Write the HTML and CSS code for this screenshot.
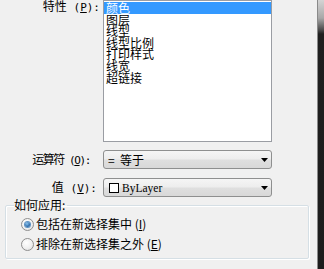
FILE: index.html
```html
<!DOCTYPE html>
<html>
<head>
<meta charset="utf-8">
<link rel="stylesheet" href="styles.css">
</head>
<body>
<div class="main">
  <div class="row row-list">
    <div class="lbl lbl-prop">特性<span class="key"> (<u>P</u>):</span></div>
    <div class="listbox">
      <div class="item sel">颜色</div>
      <div class="item">图层</div>
      <div class="item">线型</div>
      <div class="item">线型比例</div>
      <div class="item">打印样式</div>
      <div class="item">线宽</div>
      <div class="item">超链接</div>
    </div>
  </div>
  <div class="row row-combo first">
    <div class="lbl lbl-op"><span class="narrow">运算符</span><span class="key narrow-key"> (<u>O</u>):</span></div>
    <div class="combo">
      <div class="combo-text">=  等于</div>
      <svg class="arrow" width="7" height="4" viewBox="0 0 7 4"><polygon points="0,0 7,0 3.5,4" fill="#000"/></svg>
    </div>
  </div>
  <div class="row row-combo second">
    <div class="lbl lbl-val">值<span class="key"> (<u>V</u>):</span></div>
    <div class="combo">
      <div class="combo-text"><span class="swatch"></span><span class="bylayer">ByLayer</span></div>
      <svg class="arrow" width="7" height="4" viewBox="0 0 7 4"><polygon points="0,0 7,0 3.5,4" fill="#000"/></svg>
    </div>
  </div>
  <fieldset class="group">
    <legend>如何应用:</legend>
    <div class="radio-row">
      <span class="radio on"><span class="dot"></span></span>
      <span class="radio-text">包括在新选择集中 (<u>I</u>)</span>
    </div>
    <div class="radio-row">
      <span class="radio"></span>
      <span class="radio-text">排除在新选择集之外 (<u>E</u>)</span>
    </div>
  </fieldset>
</div>
<div class="edge"></div>
</body>
</html>
```
FILE: styles.css
```css
html, body {
  margin: 0;
  padding: 0;
}
body {
  width: 324px;
  height: 269px;
  overflow: hidden;
  background: #f0f0f0;
  font-family: "Noto Sans CJK SC", "Noto Sans", sans-serif;
  font-size: 12px;
  color: #000;
  display: flex;
}
.main {
  width: 317px;
  display: flex;
  flex-direction: column;
}
.row {
  display: flex;
}
.row-list {
  align-items: flex-start;
  height: 142px;
}
.lbl {
  width: 103px;
  box-sizing: border-box;
  text-align: right;
  line-height: 12px;
  white-space: nowrap;
}
.key {
  font-family: "DejaVu Sans Mono", monospace;
  font-size: 11px;
  white-space: pre;
}
.narrow {
  letter-spacing: -1.5px;
}
.narrow-key {
  letter-spacing: -1.4px;
}
.lbl-prop {
  padding-right: 3px;
  padding-top: 0;
}
.lbl-op {
  padding-right: 13px;
}
.lbl-val {
  padding-right: 6px;
}
.listbox {
  width: 169px;
  height: 142px;
  box-sizing: border-box;
  border: 1px solid #9a9da3;
  background: #fff;
  padding-top: 1px;
}
.item {
  height: 11.6px;
  line-height: 11.6px;
  padding-left: 2px;
  white-space: nowrap;
}
.item.sel {
  background: #3399ff;
  color: #fff;
}
.row-combo {
  align-items: center;
  height: 19px;
}
.row-combo.first {
  margin-top: 8px;
}
.row-combo.second {
  margin-top: 9px;
}
.combo {
  width: 169px;
  height: 19px;
  box-sizing: border-box;
  border: 1px solid #8e8f8f;
  border-radius: 3px;
  background: linear-gradient(to bottom, #f5f5f5 0%, #ededed 48%, #dfdfdf 52%, #d8d8d8 100%);
  display: flex;
  align-items: center;
}
.combo-text {
  flex: 1;
  padding-left: 4px;
  white-space: pre;
  display: flex;
  align-items: center;
  line-height: 14px;
}
.arrow {
  margin-right: 3px;
  display: block;
}
.swatch {
  width: 8px;
  height: 8px;
  border: 1px solid #000;
  background: #fff;
  margin-left: 1px;
  display: inline-block;
}
.bylayer {
  font-family: "Liberation Serif", serif;
  font-size: 11.5px;
  margin-left: 3px;
}
.group {
  margin: 1px 0 0 5px;
  width: 304px;
  box-sizing: border-box;
  border: 1px solid #d5dfe5;
  box-shadow: 1px 1px 0 #fff, inset 1px 1px 0 #fff;
  border-radius: 2px;
  padding: 0 0 4px 8px;
}
.group legend {
  padding: 0 2px 0 0;
  line-height: 14px;
  height: 14px;
}
.radio-row {
  display: flex;
  align-items: center;
  height: 20px;
}
.radio-row:first-of-type {
  margin-top: 2px;
}
.radio {
  width: 13px;
  height: 13px;
  box-sizing: border-box;
  border-radius: 50%;
  border: 1px solid #8f8f8f;
  background: radial-gradient(circle at 40% 35%, #ffffff 0%, #f0f0f0 55%, #d8d8d8 100%);
  margin-left: 7px;
  display: flex;
  align-items: center;
  justify-content: center;
}
.radio .dot {
  width: 5px;
  height: 5px;
  border-radius: 50%;
  background: radial-gradient(circle at 40% 35%, #8cc4ee 0%, #2f6fae 60%, #1a4a80 100%);
  box-shadow: 0 0 0 1px #5f93c4;
}
.radio-text {
  margin-left: 2px;
  line-height: 14px;
  white-space: nowrap;
}
.edge {
  width: 7px;
  height: 269px;
  box-sizing: border-box;
  border-left: 1px solid #8a8a8a;
  background: linear-gradient(to bottom, #d4d4d4 0px, #a8a8a8 18px, #4a4a4a 30px, #1f1f1f 34px, #1c1c1c 100%);
}
```
